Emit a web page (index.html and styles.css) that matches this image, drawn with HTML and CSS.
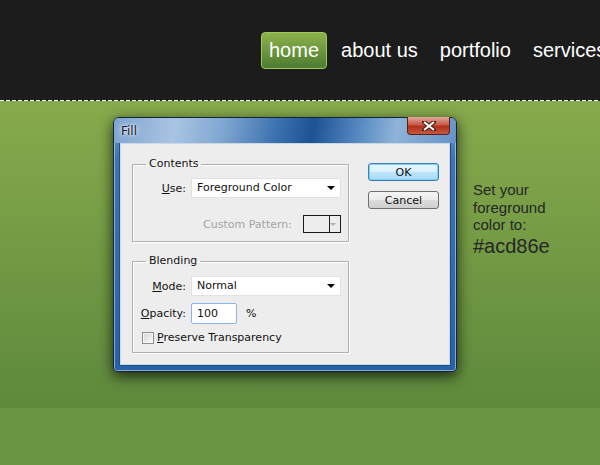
FILE: index.html
```html
<!DOCTYPE html>
<html lang="en">
<head>
  <meta charset="UTF-8" />
  <title>Fill</title>
  <link rel="stylesheet" href="styles.css">
</head>
<body>

<div class="header">
  <ul class="nav">
    <li><a class="active">home</a></li>
    <li><a>about us</a></li>
    <li><a>portfolio</a></li>
    <li><a>services</a></li>
  </ul>
</div>
<div class="dashes"></div>

<div class="main">
  <!-- Fill dialog -->
  <div class="dialog">
    <div class="titlebar">
      <span class="title">Fill</span>
      <span class="close">
        <svg width="14" height="10" viewBox="0 0 14 10"><path d="M2 1 L12 9 M12 1 L2 9" stroke="#4a1a12" stroke-width="4" stroke-linecap="square"/><path d="M2 1 L12 9 M12 1 L2 9" stroke="#fff" stroke-width="2.2"/></svg>
      </span>
    </div>
    <div class="client">
      <div class="groups">
        <fieldset class="group contents">
          <legend>Contents</legend>
          <div class="row first">
            <label><u>U</u>se:</label>
            <div class="select">Foreground Color<span class="arrow"></span></div>
          </div>
          <div class="row pattern-row">
            <span class="disabled">Custom Pattern:</span>
            <div class="pattern"><span class="pattern-arrow"></span></div>
          </div>
        </fieldset>

        <fieldset class="group blending">
          <legend>Blending</legend>
          <div class="row first">
            <label><u>M</u>ode:</label>
            <div class="select">Normal<span class="arrow"></span></div>
          </div>
          <div class="row opacity-row">
            <label><u>O</u>pacity:</label>
            <div class="input">100</div>
            <span class="pct">%</span>
          </div>
          <div class="row check-row">
            <span class="checkbox"></span>
            <span><u>P</u>reserve Transparency</span>
          </div>
        </fieldset>
      </div>
      <div class="buttons">
        <button class="btn default">OK</button>
        <button class="btn">Cancel</button>
      </div>
    </div>
  </div>

  <div class="note">
    <p>Set your foreground color to:</p>
    <p class="hex">#acd86e</p>
  </div>
</div>

<div class="footer"></div>

</body>
</html>
```

FILE: styles.css
```css
body {
  margin: 0;
  font-family: "Liberation Sans", Arial, sans-serif;
  background: #6a9641;
  overflow: hidden;
}

.header {
  height: 100px;
  background: #1c1c1c;
}

.nav {
  list-style: none;
  margin: 0;
  padding: 32px 0 0 258px;
  display: flex;
  white-space: nowrap;
}

.nav li {
  margin: 0 3px;
}

.nav a {
  display: block;
  height: 35px;
  line-height: 34px;
  padding: 0 7px;
  font-size: 20px;
  color: #fff;
  border: 1px solid transparent;
  border-radius: 4px;
}

.nav a.active {
  background: linear-gradient(#8db24c, #4d7c31);
  border-color: #9cc95c;
}

.dashes {
  height: 1px;
  background: repeating-linear-gradient(90deg, #fff 0 4px, #1c1c1c 4px 6px);
}

.main {
  height: 307px;
  background: linear-gradient(#87aa4c, #5e893c);
  display: flex;
  align-items: flex-start;
  padding: 16px 0 0 113px;
  box-sizing: border-box;
}

/* dialog */
.dialog {
  width: 344px;
  height: 255px;
  box-sizing: border-box;
  border: 1px solid #15263a;
  border-radius: 6px 6px 4px 4px;
  background: linear-gradient(#6f9cca 0, #3f74b2 40px, #2762a7 100%);
  box-shadow: 0 4px 14px rgba(0,0,0,0.75), inset 0 0 0 1px rgba(255,255,255,0.45);
  font-family: "DejaVu Sans", Tahoma, sans-serif;
  font-size: 11px;
  color: #111;
  padding: 0 6px 6px;
}

.titlebar {
  height: 25px;
  position: relative;
  margin: 0 -6px;
  padding-left: 7px;
  border-radius: 5px 5px 0 0;
  background: linear-gradient(100deg, #7ea5d0 0%, #a9c4e2 18%, #7fa6d2 32%, #3a70ae 48%, #1d5394 58%, #5a8cc3 72%, #8fb3d8 82%, #6592c6 100%);
}

.title {
  line-height: 27px;
  font-size: 12px;
  color: #1a1a2a;
  text-shadow: 0 0 6px #fff, 0 0 3px #fff;
}

.close {
  position: absolute;
  top: -1px;
  right: 6px;
  width: 43px;
  height: 18px;
  box-sizing: border-box;
  border: 1px solid #5c2219;
  border-top: none;
  border-radius: 0 0 4px 4px;
  background: linear-gradient(#e0a99c, #c95a45 45%, #b2301c 55%, #c55a3c);
  display: flex;
  justify-content: center;
  align-items: center;
}

.client {
  height: 222px;
  box-sizing: border-box;
  background: #ededed;
  border: 1px solid #ccd8e6;
  outline: 1px solid #1e4f8c;
  display: flex;
  align-items: flex-start;
}

.groups {
  margin: 13px 0 0 11px;
}

.group {
  width: 217px;
  box-sizing: border-box;
  margin: 0;
  padding: 0 7px 7px 0;
  border: 1px solid #b0b0b0;
  box-shadow: inset 1px 1px 0 #fff, 1px 1px 0 #fff;
}

.group legend {
  margin-left: 13px;
  padding: 0 3px;
  font-size: 11px;
  line-height: 14px;
}

.group.blending {
  margin-top: 12px;
}

.row {
  display: flex;
  align-items: center;
}

.row label {
  width: 53px;
  text-align: right;
  margin-right: 5px;
}

.contents .first {
  margin-top: 7px;
}

.blending .first {
  margin-top: 8px;
}

.select {
  width: 150px;
  height: 20px;
  box-sizing: border-box;
  background: #fff;
  border: 1px solid #e2e2e2;
  padding-left: 5px;
  line-height: 18px;
  position: relative;
}

.arrow {
  position: absolute;
  right: 5px;
  top: 7px;
  border: 4px solid transparent;
  border-top: 4px solid #000;
  border-bottom: none;
}

.pattern-row {
  justify-content: flex-end;
  margin-top: 17px;
  padding-bottom: 1px;
}

.disabled {
  color: #a4a4a4;
  margin-right: 11px;
}

.pattern {
  width: 38px;
  height: 18px;
  box-sizing: border-box;
  border: 1px solid #1a1a1a;
  position: relative;
}

.pattern::after {
  content: "";
  position: absolute;
  left: 25px;
  top: 0;
  bottom: 0;
  border-left: 1px solid #1a1a1a;
}

.pattern-arrow {
  position: absolute;
  right: 4px;
  top: 7px;
  border: 3px solid transparent;
  border-top: 3px solid #b0b0b0;
  border-bottom: none;
}

.opacity-row {
  margin-top: 7px;
}

.input {
  width: 46px;
  height: 21px;
  box-sizing: border-box;
  background: #fff;
  border: 1px solid #8ab8e6;
  border-radius: 2px;
  padding-left: 5px;
  line-height: 19px;
}

.pct {
  margin-left: 9px;
}

.check-row {
  margin-top: 7px;
  padding-left: 9px;
  line-height: 14px;
}

.checkbox {
  width: 12px;
  height: 12px;
  box-sizing: border-box;
  border: 1px solid #8f8f8f;
  background: linear-gradient(135deg, #d6d6d6, #fafafa);
  box-shadow: inset 0 0 0 1px #f4f4f4;
  margin-right: 3px;
}

.buttons {
  margin: 19px 0 0 19px;
  display: flex;
  flex-direction: column;
  gap: 10px;
}

.btn {
  width: 71px;
  height: 18px;
  padding: 0;
  font-family: "DejaVu Sans", Tahoma, sans-serif;
  font-size: 11px;
  color: #111;
  border: 1px solid #707070;
  border-radius: 3px;
  background: linear-gradient(#f4f4f4 0, #ebebeb 50%, #dddddd 50%, #cfcfcf 100%);
}

.btn.default {
  border-color: #3c7fb1;
  background: linear-gradient(#eaf6fd 0, #d9f0fc 50%, #bee6fd 50%, #a7d9f5 100%);
  box-shadow: inset 0 0 0 1px #7fd0f8;
}

/* side note */
.note {
  margin: 64px 0 0 16px;
  color: #262626;
  font-size: 15px;
  line-height: 17.5px;
  width: 90px;
}

.note p {
  margin: 0;
}

.note .hex {
  font-size: 20px;
  line-height: 23px;
  margin-top: 1px;
}

.footer {
  height: 57px;
  background: #6a9641;
}
```
